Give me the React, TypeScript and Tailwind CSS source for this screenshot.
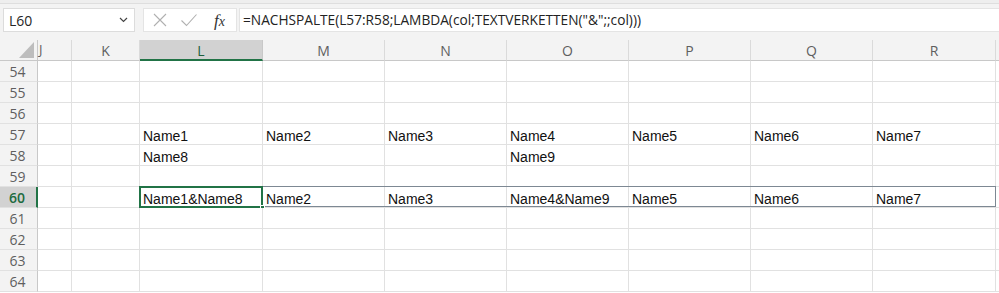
import React from "react";

const COLS = [
  { key: "L", w: 123 },
  { key: "M", w: 122 },
  { key: "N", w: 122 },
  { key: "O", w: 122 },
  { key: "P", w: 122 },
  { key: "Q", w: 122 },
  { key: "R", w: 123 },
];

const DATA: Record<number, string[]> = {
  57: ["Name1", "Name2", "Name3", "Name4", "Name5", "Name6", "Name7"],
  58: ["Name8", "", "", "Name9", "", "", ""],
  60: ["Name1&Name8", "Name2", "Name3", "Name4&Name9", "Name5", "Name6", "Name7"],
};

const ROWS = [54, 55, 56, 57, 58, 59, 60, 61, 62, 63, 64];

const uiFont = { fontFamily: '"Open Sans", "Noto Sans", sans-serif' };
const cellFont = { fontFamily: '"Liberation Sans", Arial, sans-serif' };

function Row({ n }: { n: number }) {
  const active = n === 60;
  const vals = DATA[n] || ["", "", "", "", "", "", ""];
  return (
    <div className="flex h-[21px]">
      <div
        className={
          active
            ? "w-[38px] shrink-0 flex items-center justify-center bg-[#d2d2d2] border-r-2 border-r-[#217346] border-b border-b-[#e1e1e1] text-[14px] font-semibold text-[#1d6b3f]"
            : "w-[38px] shrink-0 flex items-center justify-center bg-[#f3f3f3] border-r border-r-[#c8c8c8] border-b border-b-[#e1e1e1] text-[14px] text-[#5f5f5f]"
        }
        style={uiFont}
      >
        <span className="pr-[2px] pt-[1px]">{n}</span>
      </div>
      <div className="w-[34px] shrink-0 border-r border-b border-[#e1e1e1] bg-white" />
      <div className="w-[68px] shrink-0 border-r border-b border-[#e1e1e1] bg-white" />
      <div className="relative flex shrink-0">
        {COLS.map((c, i) => (
          <div
            key={c.key}
            className="shrink-0 flex items-start pl-[3px] pt-[3px] border-r border-b border-[#e1e1e1] bg-white text-[14px] text-[#111] leading-[18px] whitespace-nowrap overflow-hidden"
            style={{ width: c.w, ...cellFont }}
          >
            {vals[i]}
          </div>
        ))}
        {active && (
          <>
            <div className="absolute left-0 top-0 right-0 bottom-0 -translate-y-[1px] border border-[#7d8893] pointer-events-none" />
            <div className="absolute left-[-1px] top-[-1px] w-[124px] h-[22px] border-2 border-[#217346] pointer-events-none" />
            <div className="absolute left-[120px] top-[18px] w-[5px] h-[5px] bg-[#217346] border border-white pointer-events-none" />
          </>
        )}
      </div>
      <div className="flex-1 border-b border-[#e1e1e1] bg-white" />
    </div>
  );
}

export default function App() {
  return (
    <div className="w-[999px] h-[293px] overflow-hidden bg-white select-none">
      {/* toolbar */}
      <div className="h-[40px] bg-[#f3f3f3] flex flex-col">
        <div className="h-[4px] bg-[#eeeeee] border-b border-[#dedede]" />
        <div className="flex items-start pt-[4px] pl-[3px]">
          <div
            className="w-[132px] h-[24px] bg-white border border-[#dcdcdc] flex items-center justify-between pl-[5px] pr-[5px] text-[14px] text-[#262626]"
            style={uiFont}
          >
            <span>L60</span>
            <svg width="9" height="6" viewBox="0 0 9 6" className="mr-[1px]">
              <path d="M1 1 L4.5 4.5 L8 1" fill="none" stroke="#444" strokeWidth="1.2" />
            </svg>
          </div>
          <div className="w-[8px]" />
          <div className="w-[94px] h-[24px] bg-white border border-[#e4e4e4] flex items-center">
            <svg width="16" height="16" viewBox="0 0 16 16" className="ml-[8px]">
              <path d="M2 2 L14 14 M14 2 L2 14" stroke="#b0b0b0" strokeWidth="1.1" fill="none" />
            </svg>
            <svg width="18" height="16" viewBox="0 0 18 16" className="ml-[12px]">
              <path d="M1.5 8.5 L6.5 13.5 L16.5 2.5" stroke="#b0b0b0" strokeWidth="1.1" fill="none" />
            </svg>
            <span
              className="ml-[16px] text-[17px] italic text-[#333] leading-none"
              style={{ fontFamily: '"Liberation Serif", "DejaVu Serif", serif' }}
            >
              f<span className="text-[14px]">x</span>
            </span>
          </div>
          <div className="w-[2px]" />
          <div
            className="flex-1 h-[24px] bg-white border border-[#e4e4e4] border-r-0 flex items-center pl-[3px] text-[13.7px] text-[#222] whitespace-nowrap"
            style={uiFont}
          >
            =NACHSPALTE(L57:R58;LAMBDA(col;TEXTVERKETTEN("&amp;";;col)))
          </div>
        </div>
      </div>
      {/* column headers */}
      <div className="flex h-[21px] bg-[#f3f3f3] text-[14px] text-[#5f5f5f]" style={uiFont}>
        <div className="w-[38px] shrink-0 border-r border-r-[#c8c8c8] border-b border-b-[#c8c8c8] flex items-end justify-end pr-[3px] pb-[2px]">
          <svg width="15" height="16" viewBox="0 0 15 16">
            <path d="M15 0 L15 16 L0 16 Z" fill="#bdbdbd" />
          </svg>
        </div>
        <div className="w-[34px] shrink-0 border-r border-r-[#dadada] border-b border-b-[#c8c8c8] flex items-center">
          <span className="ml-[1px] text-[13px]">J</span>
        </div>
        <div className="w-[68px] shrink-0 border-r border-r-[#dadada] border-b border-b-[#c8c8c8] flex items-center justify-center">
          K
        </div>
        {COLS.map((c) =>
          c.key === "L" ? (
            <div
              key={c.key}
              className="shrink-0 bg-[#d2d2d2] border-r border-r-[#c8c8c8] border-b-2 border-b-[#217346] flex items-center justify-center text-[#1d5e3a] pt-[1px]"
              style={{ width: c.w }}
            >
              L
            </div>
          ) : (
            <div
              key={c.key}
              className="shrink-0 border-r border-r-[#dadada] border-b border-b-[#c8c8c8] flex items-center justify-center"
              style={{ width: c.w }}
            >
              {c.key}
            </div>
          )
        )}
        <div className="flex-1 border-b border-b-[#c8c8c8]" />
      </div>
      {ROWS.map((n) => (
        <Row key={n} n={n} />
      ))}
    </div>
  );
}
